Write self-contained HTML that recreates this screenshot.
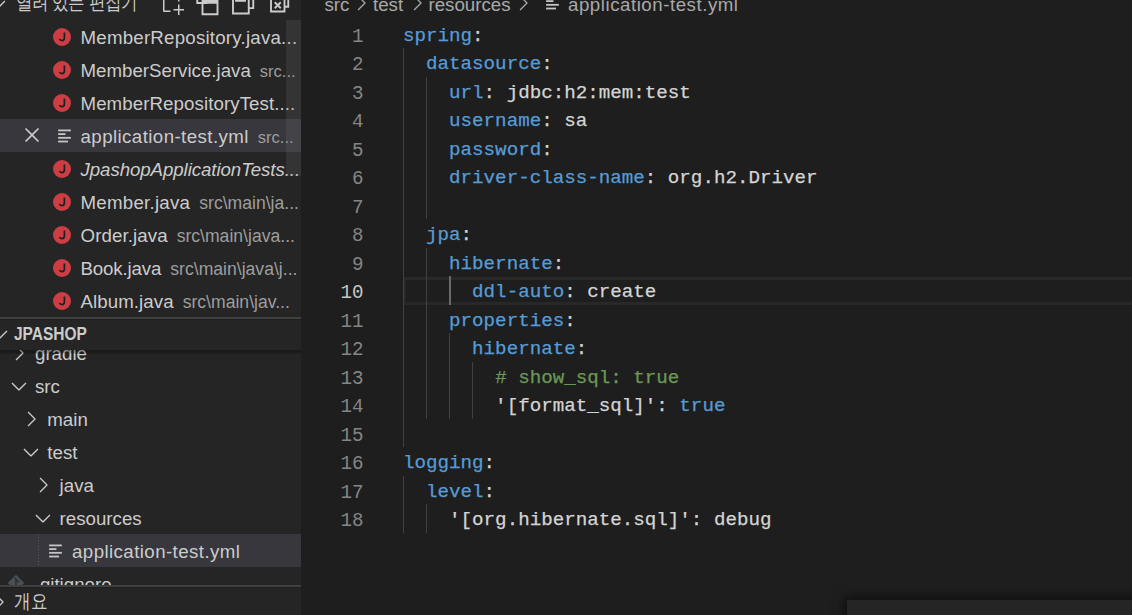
<!DOCTYPE html>
<html><head><meta charset="utf-8">
<style>
*{margin:0;padding:0;box-sizing:border-box}
html,body{width:1132px;height:615px;overflow:hidden;background:#1e1e1e;font-family:"Liberation Sans",sans-serif}
.abs{position:absolute}
#side{position:absolute;left:0;top:0;width:301px;height:615px;background:#252526;overflow:hidden}
#side .t{position:absolute;white-space:nowrap;color:#cccccc;font-size:18.7px;line-height:33px}
.row{position:absolute;left:0;width:301px;height:33px}
.sel{background:#37373d}
.ji{position:absolute;left:53px;width:18px;height:18px}
.ic{position:absolute;width:24px;height:24px;fill:#cccccc}
.d{color:#9d9d9d;font-size:17.6px}
#ed{position:absolute;left:301px;top:0;width:831px;height:615px;background:#1e1e1e}
.ln{position:absolute;left:299.6px;width:64px;padding-top:2.6px;transform:scaleY(1.09);transform-origin:0 78%;text-align:right;color:#858585;font-family:"Liberation Mono",monospace;font-size:19.2px;line-height:28.5px;height:28.5px}
.cl{position:absolute;left:403px;padding-top:2px;white-space:pre;color:#d4d4d4;-webkit-text-stroke:0.25px currentColor;font-family:"Liberation Mono",monospace;font-size:19.2px;line-height:28.5px;height:28.5px}
.k{color:#569cd6}
.c{color:#6a9955}
.g{position:absolute;width:1px;background:#404040}
.bt{position:absolute;top:-12.4px;white-space:nowrap;color:#a9a9a9;font-size:18.7px;line-height:33px}
.bic{fill:#a9a9a9}
</style></head><body>
<div id="ed"></div>
<div class="abs" style="left:403px;top:277px;width:729px;height:28px;border:3px solid #282828;border-right:none"></div>
<div class="abs" style="left:449px;top:276px;width:2px;height:28.5px;background:#6a6a6a"></div>
<div class="g" style="left:403px;top:48.0px;height:399.0px"></div>
<div class="g" style="left:403px;top:475.5px;height:57.0px"></div>
<div class="g" style="left:426px;top:76.5px;height:142.5px"></div>
<div class="g" style="left:426px;top:247.5px;height:171.0px"></div>
<div class="g" style="left:426px;top:504.0px;height:28.5px"></div>
<div class="g" style="left:449px;top:333.0px;height:85.5px"></div>
<div class="g" style="left:472px;top:361.5px;height:57.0px"></div>
<div class="ln" style="top:19.5px">1</div>
<div class="cl" style="top:19.5px"><span class="k">spring</span>:</div>
<div class="ln" style="top:48.0px">2</div>
<div class="cl" style="top:48.0px">  <span class="k">datasource</span>:</div>
<div class="ln" style="top:76.5px">3</div>
<div class="cl" style="top:76.5px">    <span class="k">url</span>: jdbc:h2:mem:test</div>
<div class="ln" style="top:105.0px">4</div>
<div class="cl" style="top:105.0px">    <span class="k">username</span>: sa</div>
<div class="ln" style="top:133.5px">5</div>
<div class="cl" style="top:133.5px">    <span class="k">password</span>:</div>
<div class="ln" style="top:162.0px">6</div>
<div class="cl" style="top:162.0px">    <span class="k">driver-class-name</span>: org.h2.Driver</div>
<div class="ln" style="top:190.5px">7</div>
<div class="cl" style="top:190.5px"></div>
<div class="ln" style="top:219.0px">8</div>
<div class="cl" style="top:219.0px">  <span class="k">jpa</span>:</div>
<div class="ln" style="top:247.5px">9</div>
<div class="cl" style="top:247.5px">    <span class="k">hibernate</span>:</div>
<div class="ln" style="color:#c6c6c6;top:276.0px">10</div>
<div class="cl" style="top:276.0px">      <span class="k">ddl-auto</span>: create</div>
<div class="ln" style="top:304.5px">11</div>
<div class="cl" style="top:304.5px">    <span class="k">properties</span>:</div>
<div class="ln" style="top:333.0px">12</div>
<div class="cl" style="top:333.0px">      <span class="k">hibernate</span>:</div>
<div class="ln" style="top:361.5px">13</div>
<div class="cl" style="top:361.5px">        <span class="c"># show_sql: true</span></div>
<div class="ln" style="top:390.0px">14</div>
<div class="cl" style="top:390.0px">        '[format_sql]': <span class="k">true</span></div>
<div class="ln" style="top:418.5px">15</div>
<div class="cl" style="top:418.5px"></div>
<div class="ln" style="top:447.0px">16</div>
<div class="cl" style="top:447.0px"><span class="k">logging</span>:</div>
<div class="ln" style="top:475.5px">17</div>
<div class="cl" style="top:475.5px">  <span class="k">level</span>:</div>
<div class="ln" style="top:504.0px">18</div>
<div class="cl" style="top:504.0px">    '[org.hibernate.sql]': debug</div>


<div class="bt" style="left:324.5px">src</div>
<svg class="ic bic" style="left:349px;top:-8.9px" viewBox="0 0 16 16"><path d="M10.072 8.024L5.715 3.667l.618-.62L11 7.716v.618L6.333 13l-.618-.619 4.357-4.357z"/></svg>
<div class="bt" style="left:373px">test</div>
<svg class="ic bic" style="left:404.5px;top:-8.9px" viewBox="0 0 16 16"><path d="M10.072 8.024L5.715 3.667l.618-.62L11 7.716v.618L6.333 13l-.618-.619 4.357-4.357z"/></svg>
<div class="bt" style="left:428.5px">resources</div>
<svg class="ic bic" style="left:511px;top:-8.9px" viewBox="0 0 16 16"><path d="M10.072 8.024L5.715 3.667l.618-.62L11 7.716v.618L6.333 13l-.618-.619 4.357-4.357z"/></svg>
<svg class="ic" style="left:540.5px;top:-8.7px" viewBox="0 0 16 16"><rect x="3.4" y="3.67" width="8.5" height="1.2" fill="#c5c5c5"/><rect x="3.4" y="6.14" width="4.9" height="1.2" fill="#c5c5c5"/><rect x="3.4" y="8.61" width="8.5" height="1.2" fill="#c5c5c5"/><rect x="3.4" y="11.08" width="6.6" height="1.2" fill="#c5c5c5"/></svg>
<div class="bt" style="left:568px;letter-spacing:0.53px">application-test.yml</div>
<div class="abs" style="left:847px;top:600px;width:300px;height:40px;background:#252526;box-shadow:0 0 10px 3px rgba(0,0,0,0.55)"></div>
<div id="side">
<svg class="ic" style="left:-14px;top:-7.8px" viewBox="0 0 16 16"><path d="M7.976 10.072l4.357-4.357.62.618L8.284 11h-.618L3 6.333l.619-.618 4.357 4.357z"/></svg>
<div class="t" style="left:15.7px;top:-13.4px;font-size:16.4px;transform:scaleY(1.15);transform-origin:0 66%">열려 있는 편집기</div>
<svg class="ic" style="left:159.5px;top:-9.5px" viewBox="0 0 16 16"><path d="M9.5 1.1l3.4 3.5.1.4v2h-1V6H8V2H3v11h4v1H2.5l-.5-.5v-12l.5-.5h6.7l.3.1zM9 2v3h2.9L9 2zm4 14h-1v-3H9v-1h3V9h1v3h3v1h-3v3z"/></svg>
<svg class="ic" style="left:195px;top:-9.5px;overflow:visible;fill:none" viewBox="0 0 16 16" stroke="#cccccc" stroke-width="1.25"><path d="M1.5 1.5h6v6.5h-6z"/><path d="M5 6.5h10v9h-10z"/><path d="M5 7.5h10" stroke-width="2"/></svg>
<svg class="ic" style="left:230px;top:-9.5px;overflow:visible;fill:none" viewBox="0 0 16 16" stroke="#cccccc" stroke-width="1.25"><path d="M2 3.5h10.5v11.5h-10.5z"/><path d="M4 3.5h6v3h-6z" style="fill:#cccccc"/><path d="M5 1.5h10.5v9.9h-3"/></svg>
<svg class="ic" style="left:268px;top:-9.5px;overflow:visible;fill:none" viewBox="0 0 16 16" stroke="#cccccc" stroke-width="1.25"><path d="M2 4.5h9v9.2h-9z"/><path d="M4.5 7.5l4 4M8.5 7.5l-4 4"/><path d="M4 2.5h9.5v8h-2.5"/></svg>
<div class="row" style="top:20px">
<svg class="ji" style="top:7.6px" viewBox="0 0 18 18"><circle cx="9" cy="9" r="9" fill="#cc3e44"/><path d="M11.4 4.6V10Q11.4 12.6 8.9 12.6Q7.2 12.6 6.5 11" fill="none" stroke="#1f1f1f" stroke-width="1.7"/></svg>
<div class="t" style="left:80.5px;top:1px;"><span style="letter-spacing:0.22px">MemberRepository.java...</span></div>
</div>
<div class="row" style="top:53px">
<svg class="ji" style="top:7.6px" viewBox="0 0 18 18"><circle cx="9" cy="9" r="9" fill="#cc3e44"/><path d="M11.4 4.6V10Q11.4 12.6 8.9 12.6Q7.2 12.6 6.5 11" fill="none" stroke="#1f1f1f" stroke-width="1.7"/></svg>
<div class="t" style="left:80.5px;top:1px;">MemberService.java<span class="d" style="margin-left:9px;font-size:16.5px">src...</span></div>
</div>
<div class="row" style="top:86px">
<svg class="ji" style="top:7.6px" viewBox="0 0 18 18"><circle cx="9" cy="9" r="9" fill="#cc3e44"/><path d="M11.4 4.6V10Q11.4 12.6 8.9 12.6Q7.2 12.6 6.5 11" fill="none" stroke="#1f1f1f" stroke-width="1.7"/></svg>
<div class="t" style="left:80.5px;top:1px;"><span style="letter-spacing:0.08px">MemberRepositoryTest....</span></div>
</div>
<div class="row sel" style="top:119px">
<svg class="ic" style="left:19px;top:2.9px;width:26px;height:26px" viewBox="0 0 16 16"><path d="M8 8.707l3.646 3.647.708-.707L8.707 8l3.647-3.646-.707-.708L8 7.293 4.354 3.646l-.707.708L7.293 8l-3.646 3.646.707.708L8 8.707z"/></svg>
<svg class="ic" style="left:53px;top:4.5px" viewBox="0 0 16 16"><rect x="3.4" y="3.67" width="8.5" height="1.2" fill="#c5c5c5"/><rect x="3.4" y="6.14" width="4.9" height="1.2" fill="#c5c5c5"/><rect x="3.4" y="8.61" width="8.5" height="1.2" fill="#c5c5c5"/><rect x="3.4" y="11.08" width="6.6" height="1.2" fill="#c5c5c5"/></svg>
<div class="t" style="left:80.5px;top:1px;"><span style="letter-spacing:0.42px">application-test.yml</span><span class="d" style="margin-left:9px;font-size:16.5px">src...</span></div>
</div>
<div class="row" style="top:152px">
<svg class="ji" style="top:7.6px" viewBox="0 0 18 18"><circle cx="9" cy="9" r="9" fill="#cc3e44"/><path d="M11.4 4.6V10Q11.4 12.6 8.9 12.6Q7.2 12.6 6.5 11" fill="none" stroke="#1f1f1f" stroke-width="1.7"/></svg>
<div class="t" style="left:80.5px;top:1px;font-style:italic;"><span style="letter-spacing:-0.08px">JpashopApplicationTests...</span></div>
</div>
<div class="row" style="top:185px">
<svg class="ji" style="top:7.6px" viewBox="0 0 18 18"><circle cx="9" cy="9" r="9" fill="#cc3e44"/><path d="M11.4 4.6V10Q11.4 12.6 8.9 12.6Q7.2 12.6 6.5 11" fill="none" stroke="#1f1f1f" stroke-width="1.7"/></svg>
<div class="t" style="left:80.5px;top:1px;"><span style="letter-spacing:0.25px">Member.java</span><span class="d" style="margin-left:9px;font-size:17.6px">src\main\ja...</span></div>
</div>
<div class="row" style="top:218px">
<svg class="ji" style="top:7.6px" viewBox="0 0 18 18"><circle cx="9" cy="9" r="9" fill="#cc3e44"/><path d="M11.4 4.6V10Q11.4 12.6 8.9 12.6Q7.2 12.6 6.5 11" fill="none" stroke="#1f1f1f" stroke-width="1.7"/></svg>
<div class="t" style="left:80.5px;top:1px;"><span style="letter-spacing:0.09px">Order.java</span><span class="d" style="margin-left:9px;font-size:17.6px">src\main\java...</span></div>
</div>
<div class="row" style="top:251px">
<svg class="ji" style="top:7.6px" viewBox="0 0 18 18"><circle cx="9" cy="9" r="9" fill="#cc3e44"/><path d="M11.4 4.6V10Q11.4 12.6 8.9 12.6Q7.2 12.6 6.5 11" fill="none" stroke="#1f1f1f" stroke-width="1.7"/></svg>
<div class="t" style="left:80.5px;top:1px;"><span style="letter-spacing:-0.14px">Book.java</span><span class="d" style="margin-left:9px;font-size:17.6px">src\main\java\j...</span></div>
</div>
<div class="row" style="top:284px">
<svg class="ji" style="top:7.6px" viewBox="0 0 18 18"><circle cx="9" cy="9" r="9" fill="#cc3e44"/><path d="M11.4 4.6V10Q11.4 12.6 8.9 12.6Q7.2 12.6 6.5 11" fill="none" stroke="#1f1f1f" stroke-width="1.7"/></svg>
<div class="t" style="left:80.5px;top:1px;"><span style="letter-spacing:0.07px">Album.java</span><span class="d" style="margin-left:9px;font-size:17.6px">src\main\jav...</span></div>
</div>
<div class="row" style="top:336px">
<svg class="ic" style="left:7px;top:4.5px" viewBox="0 0 16 16"><path d="M10.072 8.024L5.715 3.667l.618-.62L11 7.716v.618L6.333 13l-.618-.619 4.357-4.357z"/></svg>
<div class="t" style="left:35.0px;top:1px">gradle</div>
</div>
<div class="row" style="top:369px">
<svg class="ic" style="left:7px;top:4.5px" viewBox="0 0 16 16"><path d="M7.976 10.072l4.357-4.357.62.618L8.284 11h-.618L3 6.333l.619-.618 4.357 4.357z"/></svg>
<div class="t" style="left:35.0px;top:1px">src</div>
</div>
<div class="row" style="top:402px">
<svg class="ic" style="left:19px;top:4.5px" viewBox="0 0 16 16"><path d="M10.072 8.024L5.715 3.667l.618-.62L11 7.716v.618L6.333 13l-.618-.619 4.357-4.357z"/></svg>
<div class="t" style="left:47.3px;top:1px">main</div>
</div>
<div class="row" style="top:435px">
<svg class="ic" style="left:19px;top:4.5px" viewBox="0 0 16 16"><path d="M7.976 10.072l4.357-4.357.62.618L8.284 11h-.618L3 6.333l.619-.618 4.357 4.357z"/></svg>
<div class="t" style="left:47.3px;top:1px">test</div>
</div>
<div class="row" style="top:468px">
<svg class="ic" style="left:31px;top:4.5px" viewBox="0 0 16 16"><path d="M10.072 8.024L5.715 3.667l.618-.62L11 7.716v.618L6.333 13l-.618-.619 4.357-4.357z"/></svg>
<div class="t" style="left:59.6px;top:1px">java</div>
</div>
<div class="row" style="top:501px">
<svg class="ic" style="left:31px;top:4.5px" viewBox="0 0 16 16"><path d="M7.976 10.072l4.357-4.357.62.618L8.284 11h-.618L3 6.333l.619-.618 4.357 4.357z"/></svg>
<div class="t" style="left:59.6px;top:1px">resources</div>
</div>
<div class="row sel" style="top:534px">
<div class="abs" style="left:38px;top:0;width:1px;height:33px;background-image:linear-gradient(#585858 50%,transparent 50%);background-size:1px 3px"></div>
<svg class="ic" style="left:43.9px;top:4.5px" viewBox="0 0 16 16"><rect x="3.4" y="3.67" width="8.5" height="1.2" fill="#c5c5c5"/><rect x="3.4" y="6.14" width="4.9" height="1.2" fill="#c5c5c5"/><rect x="3.4" y="8.61" width="8.5" height="1.2" fill="#c5c5c5"/><rect x="3.4" y="11.08" width="6.6" height="1.2" fill="#c5c5c5"/></svg>
<div class="t" style="left:72px;top:1px;letter-spacing:0.42px">application-test.yml</div>
</div>
<div class="row" style="top:567px">
<svg class="ic" style="left:3.8px;top:3.6px" viewBox="0 0 16 16"><path d="M8 2.5l5.5 5.5-5.5 5.5-5.5-5.5z" fill="#4b5053"/><path d="M7 4.5l3 3M8 5.5v6" stroke="#2a2e30" stroke-width="1"/></svg>
<div class="t" style="left:34.7px;top:1px">.gitignore</div>
</div>
<div class="abs" style="left:0;top:317px;width:301px;height:2px;background:#404041"></div><div class="abs" style="left:0;top:319px;width:301px;height:1px;background:#1f1f20"></div>
<div class="abs" style="left:0;top:320px;width:301px;height:30px;background:#252526"></div><div class="abs" style="left:0;top:350px;width:301px;height:4px;background:linear-gradient(rgba(0,0,0,0.32),rgba(0,0,0,0.28) 60%,rgba(0,0,0,0.08))"></div>
<svg class="ic" style="left:-12px;top:322px" viewBox="0 0 16 16"><path d="M7.976 10.072l4.357-4.357.62.618L8.284 11h-.618L3 6.333l.619-.618 4.357 4.357z"/></svg>
<div class="t" style="left:14px;top:319.3px;font-weight:bold;font-size:15.5px;line-height:32px;transform:scaleY(1.16);transform-origin:0 66%">JPASHOP</div>
<div class="abs" style="left:0;top:585px;width:301px;height:31px;background:#252526;border-top:2px solid #404041"></div><div class="abs" style="left:0;top:587px;width:301px;height:1px;background:#1f1f20"></div>
<svg class="ic" style="left:-13px;top:590px" viewBox="0 0 16 16"><path d="M10.072 8.024L5.715 3.667l.618-.62L11 7.716v.618L6.333 13l-.618-.619 4.357-4.357z"/></svg>
<div class="t" style="left:14px;top:587px;font-size:17px;line-height:31px;transform:scaleY(1.2);transform-origin:0 60%">개요</div>
<div class="abs" style="left:286px;top:20px;width:15px;height:156px;background:rgba(121,121,121,0.18)"></div>
</div>

</body></html>
